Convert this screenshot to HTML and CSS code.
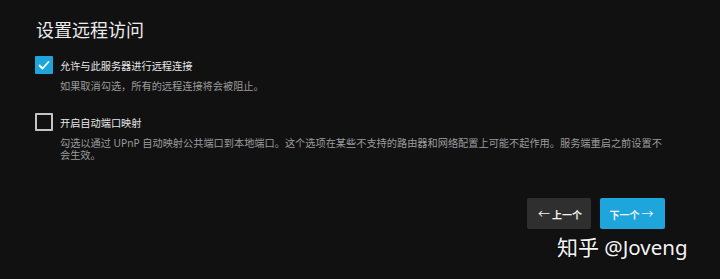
FILE: index.html
```html
<!DOCTYPE html>
<html lang="zh-CN">
<head>
    <meta charset="UTF-8">
    <title>设置远程访问</title>
    <link rel="stylesheet" href="styles.css">
</head>
<body>
    <div class="setup">
        <h1 class="setup-title">设置远程访问</h1>

        <div class="option">
            <span class="check checked">
                <svg viewBox="0 0 18 18" width="18" height="18"><polyline points="4.5,9.5 7.5,12.5 13.5,6" fill="none" stroke="#fff" stroke-width="1.8" stroke-linecap="round" stroke-linejoin="round"/></svg>
            </span>
            <span class="option-label">允许与此服务器进行远程连接</span>
            <p class="option-desc">如果取消勾选，所有的远程连接将会被阻止。</p>
        </div>

        <div class="option second">
            <span class="check"></span>
            <span class="option-label">开启自动端口映射</span>
            <p class="option-desc">勾选以通过 UPnP 自动映射公共端口到本地端口。这个选项在某些不支持的路由器和网络配置上可能不起作用。服务端重启之前设置不会生效。</p>
        </div>

        <div class="actions">
            <button class="btn btn-prev"><span class="arrow">&larr;</span>上一个</button>
            <button class="btn btn-next">下一个<span class="arrow">&rarr;</span></button>
        </div>
    </div>
    <div class="watermark"><span class="wm-cn">知乎</span> @Joveng</div>
</body>
</html>
```

FILE: styles.css
```css
body {
    margin: 0;
    background: #111112;
    color: #e6e6e6;
    font-family: "Noto Sans", "Noto Sans CJK SC", sans-serif;
    height: 279px;
    overflow: hidden;
    position: relative;
}

.setup {
    padding: 18px 55px 0 35px;
}

.setup-title {
    margin: 0 0 0 1px;
    font-size: 18px;
    font-weight: 400;
    line-height: 24px;
    color: #ececec;
}

.option {
    display: grid;
    grid-template-columns: 18px 1fr;
    column-gap: 7px;
    margin-top: 14px;
}

.option.second {
    margin-top: 21px;
}

.check {
    width: 18px;
    height: 18px;
    box-sizing: border-box;
    border: 2px solid #c4c4c4;
    border-radius: 1px;
}

.check.checked {
    border: none;
    background: #1ea6dc;
}

.check svg {
    display: block;
}

.option-label {
    font-size: 10.2px;
    line-height: 18px;
    margin-top: 1px;
    color: #e8e8e8;
}

.option-desc {
    grid-column: 2;
    margin: 5px 0 0;
    font-size: 10.2px;
    line-height: 12px;
    color: #9c9c9c;
    max-width: 604px;
}

.actions {
    display: flex;
    justify-content: flex-end;
    gap: 9px;
    margin-top: 37px;
}

.btn {
    height: 31px;
    border: none;
    border-radius: 2px;
    padding: 0;
    font-family: inherit;
    font-size: 10px;
    font-weight: 700;
    color: #f2f2f2;
    cursor: pointer;
}

.btn .arrow {
    font-size: 12px;
    font-weight: 400;
    margin: 0 2px;
}

.btn-prev {
    width: 64px;
    background: #2f2f2f;
}

.btn-next {
    width: 65px;
    background: #1ea6dc;
}

.watermark {
    position: absolute;
    left: 557px;
    top: 232px;
    font-size: 20.5px;
    line-height: 30px;
    color: #f4f4f4;
    text-shadow: 0 0 2px rgba(0, 0, 0, 0.6);
}

.wm-cn {
    font-size: 21px;
}
```
